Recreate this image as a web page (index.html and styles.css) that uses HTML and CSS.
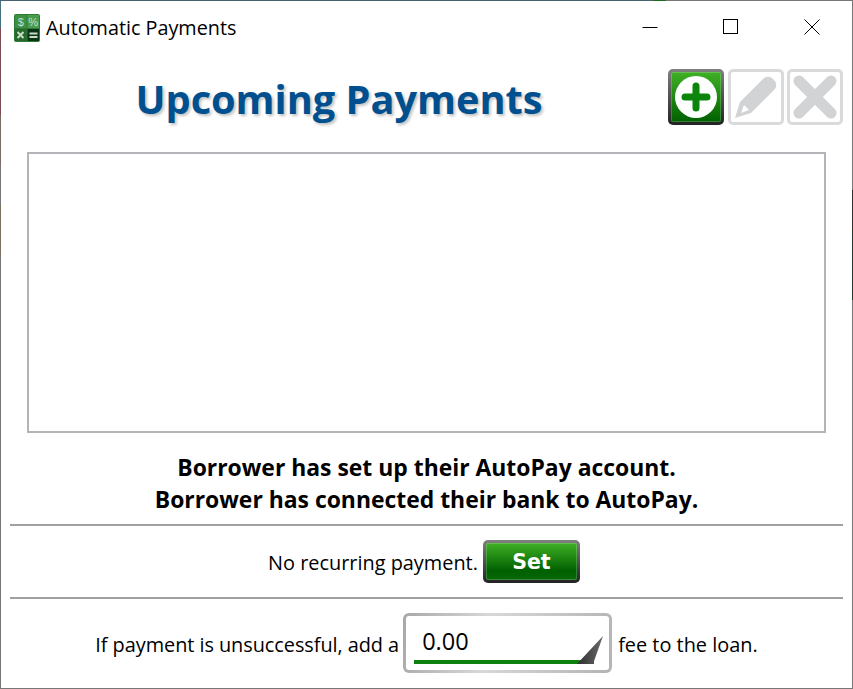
FILE: index.html
```html
<!DOCTYPE html>
<html lang="en">
<head>
    <meta charset="UTF-8">
    <title>Automatic Payments</title>
    <link rel="stylesheet" href="styles.css">
</head>
<body>
    <div class="window">
        <div class="titlebar">
            <svg class="app-icon" width="26" height="28" viewBox="0 0 26 28">
                <rect x="0" y="0" width="26" height="28" rx="2" fill="#2f7a35"/>
                <rect x="1" y="1" width="11.500" height="13" fill="#3d9042"/>
                <rect x="13.500" y="1" width="11.500" height="13" fill="#4a9c4e"/>
                <rect x="1" y="15" width="11.500" height="12" fill="#256a2c"/>
                <rect x="13.500" y="15" width="11.500" height="12" fill="#0b3316"/>
                <text x="6.700" y="12" class="icon-glyph">$</text>
                <text x="19.200" y="12" class="icon-glyph">%</text>
                <path d="M3.500 18l6 6M9.500 18l-6 6" stroke="#c8dcc6" stroke-width="2"/>
                <path d="M15.500 19.500h8M15.500 23h8" stroke="#c8dcc6" stroke-width="2"/>
            </svg>
            <span class="title-text">Automatic Payments</span>
            <div class="window-controls">
                <svg width="16" height="16" viewBox="0 0 16 16"><path d="M0.500 8.500h15" stroke="#000" fill="none"/></svg>
                <svg width="16" height="16" viewBox="0 0 16 16"><rect x="0.500" y="0.500" width="14" height="14" stroke="#000" fill="none"/></svg>
                <svg width="16" height="16" viewBox="0 0 16 16"><path d="M0.500 0.500l15 15M15.500 0.500l-15 15" stroke="#000" fill="none"/></svg>
            </div>
        </div>

        <div class="header">
            <h1>Upcoming Payments</h1>
            <div class="tool-buttons">
                <button class="tool-btn tool-add">
                    <svg width="44" height="44" viewBox="0 0 44 44">
                        <circle cx="22" cy="22" r="21" fill="#fff"/>
                        <path d="M22 11v22M11 22h22" stroke="#0d850d" stroke-width="7" stroke-linecap="round"/>
                    </svg>
                </button>
                <button class="tool-btn tool-off">
                    <svg width="44" height="44" viewBox="0 0 44 44">
                        <path d="M1 43L6 27 29 4c3-3 7-3 10 0l1 1c3 3 3 7 0 10L17 38z" fill="#d2d3d5"/>
                        <path d="M7 38l3-8 5 5z" fill="#fff"/>
                    </svg>
                </button>
                <button class="tool-btn tool-off">
                    <svg width="44" height="44" viewBox="0 0 44 44">
                        <path d="M6 6l32 32M38 6L6 38" stroke="#d2d3d5" stroke-width="11" stroke-linecap="round"/>
                    </svg>
                </button>
            </div>
        </div>

        <div class="payment-list"></div>

        <div class="status">
            <p>Borrower has set up their AutoPay account.</p>
            <p>Borrower has connected their bank to AutoPay.</p>
        </div>

        <div class="row row-recurring">
            <span class="row-label">No recurring payment.</span>
            <button class="set-btn">Set</button>
        </div>

        <div class="row row-fee">
            <span class="row-label fee-lead">If payment is unsuccessful, add a</span>
            <div class="fee-input">
                <span class="fee-value">0.00</span>
                <svg class="fee-grip" width="26" height="28" viewBox="0 0 26 28">
                    <defs>
                        <linearGradient id="gripShade" x1="0" y1="0" x2="1" y2="0">
                            <stop offset="0" stop-color="#2e2e2e"/>
                            <stop offset="1" stop-color="#6a6a6a"/>
                        </linearGradient>
                    </defs>
                    <path d="M0 28L26 0 16 28z" fill="url(#gripShade)"/>
                </svg>
            </div>
            <span class="row-label">fee to the loan.</span>
        </div>
    </div>
</body>
</html>
```

FILE: styles.css
```css
html, body {
    margin: 0;
    padding: 0;
}

body {
    font-family: "Open Sans", "Noto Sans", sans-serif;
    color: #000;
    background-color: #fff;
}

.window {
    width: 853px;
    height: 689px;
    box-sizing: border-box;
    padding: 1px 10px;
    overflow: hidden;
    background-color: #fff;
    background-repeat: no-repeat;
    background-image:
        linear-gradient(to right, #46626e 653px, #1c6a1c 653px, #1c6a1c 666px, #777 666px),
        linear-gradient(#46727e 28px, #7a4a55 28px, #7a4a55 115px, #7a6a66 115px, #7a6a66 165px, #777 165px, #777 205px, #7a6e5e 205px, #7a6e5e 255px, #777 255px),
        linear-gradient(#777 190px, #2e2e2e 190px, #2e2e2e 230px, #1f3a2a 230px, #1f3a2a 300px, #777 300px),
        linear-gradient(#777, #777);
    background-size: 100% 1px, 1px 100%, 1px 100%, 100% 1px;
    background-position: top left, top left, top right, bottom left;
}

/* Title bar */
.titlebar {
    display: flex;
    align-items: center;
    height: 53px;
    margin: 0 -10px;
    padding-left: 14px;
}

.app-icon {
    margin-right: 6px;
}

.icon-glyph {
    font-size: 11px;
    fill: #c8dcc6;
    text-anchor: middle;
    font-family: "Liberation Sans", sans-serif;
}

.title-text {
    font-size: 19.800px;
}

.window-controls {
    margin-left: auto;
    display: flex;
    gap: 65px;
    padding-right: 33px;
    margin-top: -2px;
}

/* Heading and tool buttons */
.header {
    display: flex;
    align-items: center;
    height: 56px;
    margin-top: 15px;
}

h1 {
    flex: 1;
    margin: 3px 0 0 0;
    text-align: center;
    font-size: 39.700px;
    font-weight: bold;
    color: #00508f;
    text-shadow: 2px 2px 3px rgba(0, 0, 0, 0.25);
}

.tool-buttons {
    display: flex;
    gap: 3.500px;
}

.tool-btn {
    width: 56px;
    height: 56px;
    padding: 0;
    border-radius: 5px;
    display: flex;
    align-items: center;
    justify-content: center;
    box-sizing: border-box;
    background: #fff;
}

.tool-add {
    border: 3px solid transparent;
    background: linear-gradient(#3fb025, #006000) padding-box, linear-gradient(#808080, #222) border-box;
    box-shadow: inset 0 0 0 1px rgba(255, 255, 255, 0.2);
}

.tool-off {
    border: 3px solid #d9dadb;
}

/* Payment list */
.payment-list {
    height: 281px;
    box-sizing: border-box;
    margin: 27px 17px 0 17px;
    border: 2px solid #b4b4b8;
    background-color: #fff;
}

/* Status lines */
.status {
    margin-top: 19px;
    text-align: center;
    font-size: 22.900px;
    font-weight: bold;
    line-height: 32px;
}

.status p {
    margin: 0;
}

/* Rows */
.row {
    display: flex;
    align-items: center;
    justify-content: center;
    border-top: 2px solid #a0a0a0;
    font-size: 19.900px;
}

.row-label {
    margin-top: 3px;
}

.row-recurring {
    height: 71px;
    margin-top: 8px;
    gap: 5px;
    padding-right: 5px;
}

.row-recurring .row-label {
    margin-top: 1px;
}

.row-fee {
    height: 88px;
    gap: 5px;
}

.fee-lead {
    letter-spacing: -0.050px;
    margin-right: -1px;
}

.set-btn {
    width: 97px;
    height: 43px;
    border-radius: 5px;
    border: 3px solid transparent;
    background: linear-gradient(#3fb025, #006000 75%, #0a6a0a) padding-box, linear-gradient(#808080, #222) border-box;
    box-shadow: inset 0 0 0 1px rgba(255, 255, 255, 0.2);
    color: #fff;
    font-family: "DejaVu Sans", sans-serif;
    font-weight: bold;
    font-size: 20.500px;
    padding: 0;
}

.fee-input {
    position: relative;
    width: 209px;
    height: 60px;
    box-sizing: border-box;
    border: 3px solid transparent;
    border-radius: 6px;
    background: linear-gradient(#fff, #fff) padding-box, linear-gradient(100deg, #a8a8a8, #d8d8d8 40%, #b4b4b4) border-box;
    padding: 9px 8px 0 8px;
    margin-right: 1px;
}

.fee-value {
    display: block;
    box-sizing: border-box;
    width: 180px;
    height: 39px;
    padding-left: 8px;
    border-bottom: 4px solid #0d800d;
    font-size: 23.500px;
    line-height: 32px;
}

.fee-grip {
    position: absolute;
    right: 6px;
    bottom: 6px;
}
```
